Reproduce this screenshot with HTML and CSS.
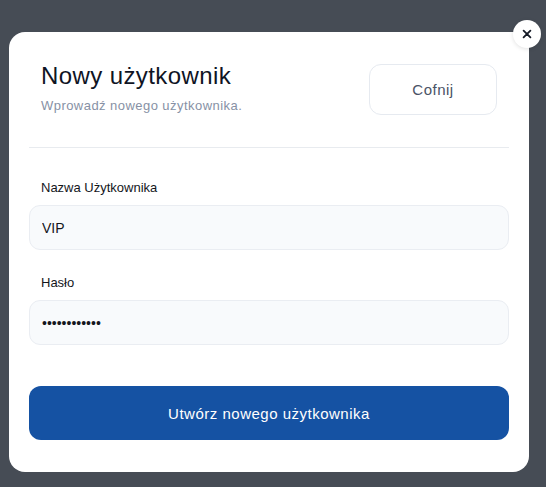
FILE: index.html
```html
<!DOCTYPE html>
<html lang="pl">
<head>
<meta charset="utf-8">
<title>Nowy użytkownik</title>
<link rel="stylesheet" href="styles.css">
</head>
<body>
<div class="overlay">
  <div class="modal">
    <button class="close" type="button" aria-label="Zamknij">
      <svg width="10" height="10" viewBox="0 0 10 10" aria-hidden="true"><path d="M1.6 1.6 L8.4 8.4 M8.4 1.6 L1.6 8.4" stroke="#151a26" stroke-width="1.8" stroke-linecap="round"/></svg>
    </button>
    <div class="header">
      <div class="titles">
        <h1 class="title">Nowy użytkownik</h1>
        <p class="subtitle">Wprowadź nowego użytkownika.</p>
      </div>
      <button class="back" type="button">Cofnij</button>
    </div>
    <div class="divider"></div>
    <form class="form">
      <div class="field">
        <label class="label" for="name">Nazwa Użytkownika</label>
        <input class="input" id="name" type="text" value="VIP">
      </div>
      <div class="field">
        <label class="label" for="pass">Hasło</label>
        <input class="input" id="pass" type="password" value="************">
      </div>
      <button class="submit" type="button">Utwórz nowego użytkownika</button>
    </form>
  </div>
</div>
</body>
</html>
```
FILE: styles.css
```css
* { box-sizing: border-box; }
html, body { margin: 0; padding: 0; }
body {
  background: #464c55;
  font-family: "Liberation Sans", Arial, sans-serif;
  width: 546px;
  height: 487px;
  overflow: hidden;
}
.overlay {
  padding: 32px 17px 0 9px;
}
.modal {
  position: relative;
  width: 520px;
  background: #ffffff;
  border-radius: 16px;
  padding: 20px 20px 32px 20px;
}
.close {
  position: absolute;
  top: -12px;
  right: -12px;
  width: 28px;
  height: 28px;
  border-radius: 50%;
  border: none;
  background: #ffffff;
  box-shadow: 0 1px 4px rgba(0,0,0,0.12);
  display: flex;
  align-items: center;
  justify-content: center;
  padding: 0;
}
.header {
  display: flex;
  justify-content: space-between;
  align-items: flex-start;
  padding: 10px 12px 32px 12px;
}
.titles { display: flex; flex-direction: column; }
.title {
  margin: 0;
  font-size: 24px;
  line-height: 28px;
  font-weight: 400;
  color: #0f1424;
  letter-spacing: 0.4px;
}
.subtitle {
  margin: 8px 0 0 0;
  font-size: 13px;
  line-height: 16px;
  color: #8791a5;
  letter-spacing: 0.45px;
}
.back {
  margin-top: 2px;
  width: 128px;
  height: 51px;
  border: 1px solid #e6eaf0;
  border-radius: 12px;
  background: #ffffff;
  font-family: inherit;
  font-size: 15px;
  letter-spacing: 0.5px;
  color: #4a5366;
}
.divider {
  height: 1px;
  background: #e8ebef;
}
.form {
  display: flex;
  flex-direction: column;
  padding-top: 32px;
}
.field {
  display: flex;
  flex-direction: column;
  margin-bottom: 25px;
}
.field + .field { margin-bottom: 41px; }
.label {
  font-size: 13px;
  line-height: 16px;
  color: #14161c;
  padding-left: 12px;
  margin-bottom: 9px;
}
.input {
  height: 45px;
  border: 1px solid #eaedf2;
  border-radius: 11px;
  background: #f8fafc;
  padding: 0 12px;
  font-family: inherit;
  font-size: 14px;
  color: #14161c;
  outline: none;
}
.submit {
  height: 54px;
  border: none;
  border-radius: 12px;
  background: #1552a3;
  color: #ffffff;
  font-family: inherit;
  font-size: 15px;
  letter-spacing: 0.5px;
}
```
